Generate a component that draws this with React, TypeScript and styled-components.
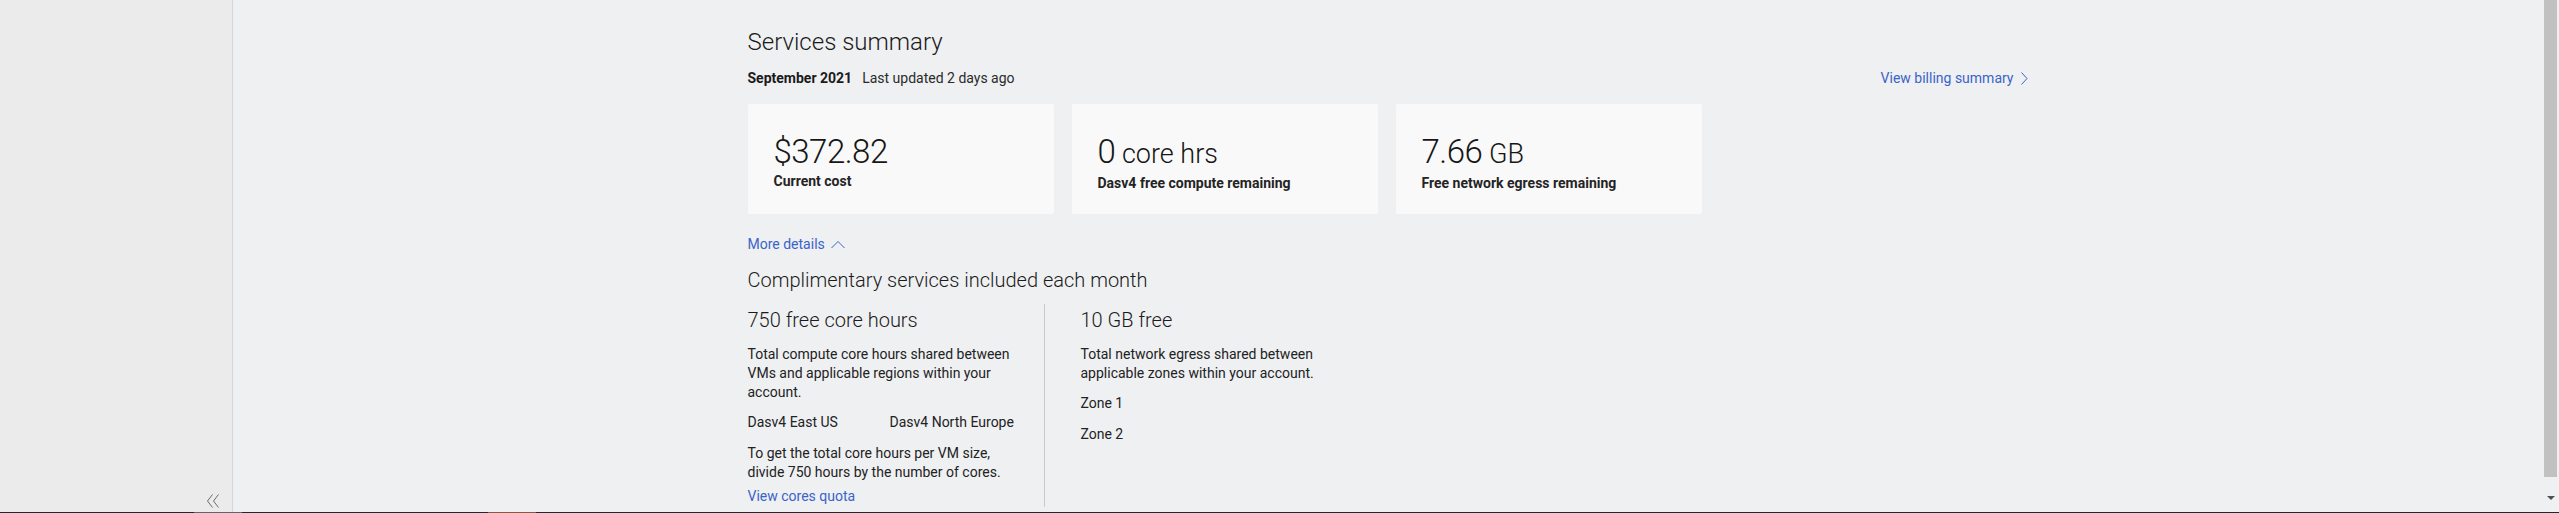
import React from "react";
import styled, { createGlobalStyle } from "styled-components";

const GlobalStyle = createGlobalStyle`
  html, body {
    margin: 0;
    padding: 0;
    height: 513px;
    overflow: hidden;
  }
  body {
    font-family: Roboto, "Open Sans", Arial, sans-serif;
    color: #1e1e1e;
    -webkit-font-smoothing: antialiased;
  }
  #root { height: 513px; overflow: hidden; }
`;

const Screen = styled.div`
  display: flex;
  flex-direction: column;
  width: 100vw;
  height: 513px;
  overflow: hidden;
`;

const Workspace = styled.div`
  flex: 1;
  min-height: 0;
  display: flex;
`;

const Sidebar = styled.aside`
  flex: 0 0 233px;
  background: #ebebeb;
  border-right: 1px solid #d6d6d6;
  display: flex;
  flex-direction: column;
  justify-content: flex-end;
  align-items: flex-end;
  padding: 0 12px 4px 0;
  box-sizing: border-box;
`;

const CollapseButton = styled.button`
  border: 0;
  background: transparent;
  padding: 0;
  width: 14px;
  height: 14px;
  display: flex;
  cursor: pointer;
`;

const Main = styled.main`
  flex: 1;
  min-width: 0;
  background: #eff0f2;
  overflow: hidden;
`;

const Content = styled.div`
  max-width: 1280px;
  margin: 0 auto;
  padding-top: 26px;
`;

const Title = styled.h1`
  margin: 0;
  font-size: 24px;
  line-height: 32px;
  font-weight: 300;
  color: #1b1b1b;
`;

const MetaRow = styled.div`
  margin-top: 10px;
  height: 20px;
  display: flex;
  align-items: center;
  justify-content: space-between;
`;

const MetaGroup = styled.div`
  display: flex;
  gap: 10px;
  font-size: 14px;
  line-height: 20px;
`;

const MetaStrong = styled.span`
  font-weight: 700;
  color: #1b1b1b;
`;

const MetaText = styled.span`
  color: #2a2a2a;
`;

const TextLink = styled.a`
  display: inline-flex;
  align-items: center;
  gap: 6px;
  font-size: 14px;
  line-height: 20px;
  color: #3a64c8;
  text-decoration: none;
  cursor: pointer;
`;

const Cards = styled.div`
  margin-top: 16px;
  display: grid;
  grid-template-columns: repeat(3, 306px);
  gap: 18px;
`;

const Card = styled.div`
  height: 110px;
  box-sizing: border-box;
  padding: 28px 26px 0;
  background: #f9f9f9;
  border-radius: 2px;
`;

const Value = styled.div`
  font-size: 33px;
  line-height: 40px;
  font-weight: 300;
  letter-spacing: -0.5px;
  color: #161616;
  white-space: nowrap;
`;

const Unit = styled.span`
  font-size: 27px;
  letter-spacing: 0;
`;

const CardLabel = styled.div`
  font-size: 14px;
  line-height: 18px;
  font-weight: 700;
  color: #242424;
`;

const Toggle = styled(TextLink)`
  margin-top: 20px;
`;

const SectionTitle = styled.h2`
  margin: 12px 0 0;
  font-size: 20px;
  line-height: 28px;
  font-weight: 300;
  color: #1b1b1b;
`;

const Columns = styled.div`
  margin-top: 10px;
  display: grid;
  grid-template-columns: 296px 300px;
`;

const Column = styled.section<{ $divided?: boolean }>`
  padding-top: 2px;
  padding-left: ${(p) => (p.$divided ? "36px" : "0")};
  border-left: ${(p) => (p.$divided ? "1px solid #c9c9c9" : "0")};
  min-height: 203px;
  box-sizing: border-box;
`;

const ColumnTitle = styled.h3`
  margin: 0;
  font-size: 20px;
  line-height: 28px;
  font-weight: 300;
  color: #1b1b1b;
`;

const Body = styled.p<{ $gap?: number }>`
  margin: ${(p) => p.$gap ?? 11}px 0 0;
  max-width: 280px;
  font-size: 14px;
  line-height: 19px;
  color: #222;
`;

const RegionGrid = styled.div`
  margin-top: 11px;
  display: grid;
  grid-template-columns: 142px auto;
  font-size: 14px;
  line-height: 19px;
  color: #222;
`;

const BodyLink = styled(TextLink)`
  margin-top: 5px;
  line-height: 19px;
`;

const ScrollTrack = styled.div`
  flex: 0 0 17px;
  background: #eff0f2;
  display: flex;
  flex-direction: column;
  align-items: center;
`;

const ScrollThumb = styled.div`
  width: 13px;
  height: 477px;
  background: #c1c1c1;
`;

const ScrollArrow = styled.div`
  flex: 1;
  display: flex;
  align-items: center;
  justify-content: center;
  padding-top: 7px;
`;

const Taskbar = styled.div`
  flex: 0 0 1px;
  display: flex;
  background: #1d2830;
`;

const TaskSegment = styled.div<{ $w: number; $c: string }>`
  width: ${(p) => p.$w}px;
  background: ${(p) => p.$c};
`;

const DoubleChevronLeft = () => (
  <svg width="14" height="14" viewBox="0 0 14 14" fill="none" stroke="#6a6a6a" strokeWidth="1">
    <path d="M6.5 0.5 L1.5 7 L6.5 13.5" />
    <path d="M12.5 0.5 L7.5 7 L12.5 13.5" />
  </svg>
);

const ChevronRight = () => (
  <svg width="8" height="13" viewBox="0 0 8 13" fill="none" stroke="#3a64c8" strokeWidth="1">
    <path d="M1.5 0.5 L7 6.5 L1.5 12.5" />
  </svg>
);

const ChevronUp = () => (
  <svg width="14" height="9" viewBox="0 0 14 9" fill="none" stroke="#3a64c8" strokeWidth="1">
    <path d="M0.5 8 L7 1.5 L13.5 8" />
  </svg>
);

const Triangle = () => (
  <svg width="8" height="4" viewBox="0 0 8 4">
    <path d="M0 0 H8 L4 4 Z" fill="#505050" />
  </svg>
);

const cards = [
  { value: "$372.82", unit: "", label: "Current cost" },
  { value: "0", unit: "core hrs", label: "Dasv4 free compute remaining" },
  { value: "7.66", unit: "GB", label: "Free network egress remaining" },
];

export default function App() {
  return (
    <>
      <GlobalStyle />
      <Screen>
        <Workspace>
          <Sidebar>
            <CollapseButton aria-label="Collapse navigation">
              <DoubleChevronLeft />
            </CollapseButton>
          </Sidebar>
          <Main>
            <Content>
              <Title>Services summary</Title>
              <MetaRow>
                <MetaGroup>
                  <MetaStrong>September 2021</MetaStrong>
                  <MetaText>Last updated 2 days ago</MetaText>
                </MetaGroup>
                <TextLink>
                  View billing summary <ChevronRight />
                </TextLink>
              </MetaRow>
              <Cards>
                {cards.map((c) => (
                  <Card key={c.label}>
                    <Value>
                      {c.value}
                      {c.unit && <Unit> {c.unit}</Unit>}
                    </Value>
                    <CardLabel>{c.label}</CardLabel>
                  </Card>
                ))}
              </Cards>
              <Toggle>
                More details <ChevronUp />
              </Toggle>
              <SectionTitle>Complimentary services included each month</SectionTitle>
              <Columns>
                <Column>
                  <ColumnTitle>750 free core hours</ColumnTitle>
                  <Body>
                    Total compute core hours shared between VMs and applicable regions within your account.
                  </Body>
                  <RegionGrid>
                    <span>Dasv4 East US</span>
                    <span>Dasv4 North Europe</span>
                  </RegionGrid>
                  <Body $gap={12}>
                    To get the total core hours per VM size, divide 750 hours by the number of cores.
                  </Body>
                  <BodyLink>View cores quota</BodyLink>
                </Column>
                <Column $divided>
                  <ColumnTitle>10 GB free</ColumnTitle>
                  <Body>Total network egress shared between applicable zones within your account.</Body>
                  <Body>Zone 1</Body>
                  <Body $gap={12}>Zone 2</Body>
                </Column>
              </Columns>
            </Content>
          </Main>
          <ScrollTrack>
            <ScrollThumb />
            <ScrollArrow>
              <Triangle />
            </ScrollArrow>
          </ScrollTrack>
        </Workspace>
        <Taskbar>
          <TaskSegment $w={194} $c="#1d2830" />
          <TaskSegment $w={48} $c="#5a6670" />
          <TaskSegment $w={246} $c="#1d2830" />
          <TaskSegment $w={48} $c="#8a5a3a" />
        </Taskbar>
      </Screen>
    </>
  );
}
